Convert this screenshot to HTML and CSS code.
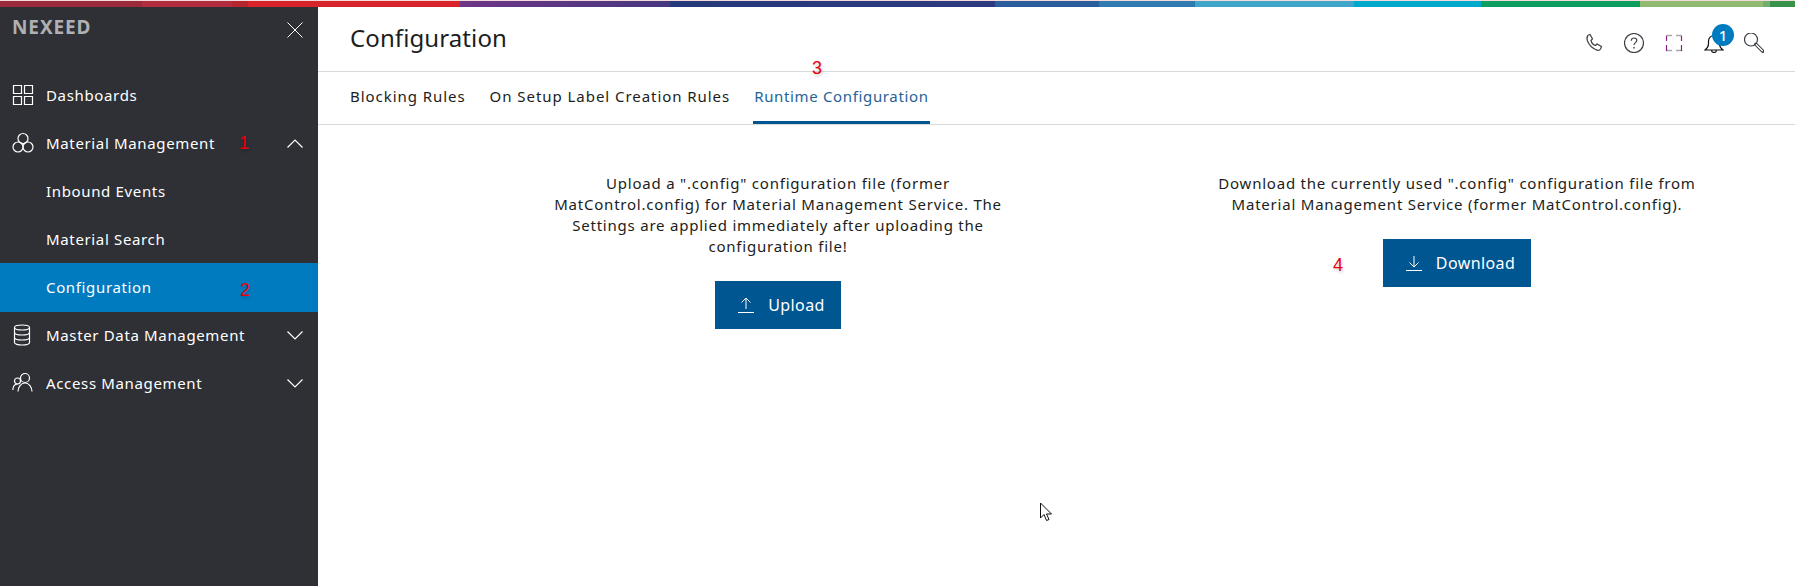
FILE: index.html
```html
<!DOCTYPE html>
<html lang="en">
<head>
    <meta charset="UTF-8">
    <meta name="viewport" content="width=device-width, initial-scale=1.0">
    <title>Configuration</title>
    <link rel="stylesheet" href="styles.css">
</head>
<body>
    <div class="stripe">
        <span class="s1"></span><span class="s2"></span><span class="s3"></span><span class="s4"></span>
        <span class="s5"></span><span class="s6"></span><span class="s7"></span><span class="s8"></span>
        <span class="s9"></span><span class="s10"></span><span class="s11"></span><span class="s12"></span>
        <span class="s13"></span><span class="s14"></span>
    </div>

    <div class="app">
        <aside class="sidebar">
            <div class="brand">
                <span class="brand-name">NEXEED</span>
                <svg class="close" width="16" height="16" viewBox="0 0 16 16"><path d="M.5.5l15 15M15.500.5l-15 15"/></svg>
            </div>
            <nav class="nav">
                <a class="nav-item">
                    <svg class="nav-icon" width="22" height="22" viewBox="0 0 22 22"><path d="M1.500 1.500h8v8h-8zM12.500 1.500h8v8h-8zM1.500 12.500h8v8h-8zM12.500 12.500h8v8h-8z"/></svg>
                    <span>Dashboards</span>
                </a>
                <a class="nav-item">
                    <svg class="nav-icon" width="22" height="22" viewBox="0 0 22 22"><circle cx="11" cy="6.500" r="5"/><circle cx="6" cy="15" r="5"/><circle cx="16" cy="15" r="5"/></svg>
                    <span>Material Management</span>
                    <svg class="chevron" width="16" height="9" viewBox="0 0 16 9"><path d="M.5 8.500L8 1l7.500 7.500"/></svg>
                </a>
                <a class="nav-item sub">Inbound Events</a>
                <a class="nav-item sub">Material Search</a>
                <a class="nav-item sub active">Configuration</a>
                <a class="nav-item">
                    <svg class="nav-icon" width="22" height="22" viewBox="0 0 22 22"><path d="M2.500 3.500c0-1.500 3.500-2.500 7.500-2.500s7.500 1 7.500 2.500v15c0 1.500-3.500 2.500-7.500 2.500s-7.500-1-7.500-2.500zM2.500 3.500c0 1.500 3.500 2.500 7.500 2.500s7.500-1 7.500-2.500M2.500 8.500c0 1.500 3.500 2.500 7.500 2.500s7.500-1 7.500-2.500M2.500 13.500c0 1.500 3.500 2.500 7.500 2.500s7.500-1 7.500-2.500"/></svg>
                    <span>Master Data Management</span>
                    <svg class="chevron" width="16" height="9" viewBox="0 0 16 9"><path d="M.5.5L8 8l7.500-7.500"/></svg>
                </a>
                <a class="nav-item">
                    <svg class="nav-icon" width="22" height="22" viewBox="0 0 22 22"><circle cx="13" cy="6" r="4.500"/><path d="M6 19.500c.2-4.500 2.800-8.500 7-8.500s6.800 4 7 8.500"/><circle cx="5.500" cy="9" r="3"/><path d="M.8 18c.1-3 1.700-5.800 4.700-6"/></svg>
                    <span>Access Management</span>
                    <svg class="chevron" width="16" height="9" viewBox="0 0 16 9"><path d="M.5.5L8 8l7.500-7.500"/></svg>
                </a>
            </nav>
        </aside>

        <main class="main">
            <header class="topbar">
                <h1>Configuration</h1>
                <div class="actions">
                    <svg class="action" width="20" height="20" viewBox="0 0 20 20"><path d="M3.500 2.500l2.500-1 2.500 4.500-1.500 1.500c.5 2 2.500 4.500 4.500 5l1.500-1.500 4.500 2.500-1 2.500c-1 1.500-3 1.500-5 .5-3.500-1.500-6.500-5-8-8.500-.8-2-.8-4 .5-5.500z"/></svg>
                    <svg class="action" width="20" height="20" viewBox="0 0 20 20"><circle cx="10" cy="10" r="9.500"/><path d="M7.300 7.800c0-1.700 1.200-2.800 2.800-2.800s2.700 1 2.700 2.400c0 2.200-2.800 2.300-2.800 4.600"/><path class="dot" d="M9.300 14h1.400v1.500H9.300z"/></svg>
                    <svg class="action frame" width="20" height="20" viewBox="0 0 20 20">
                        <path class="frame-edge" d="M2 2.500h6M12 2.500h6M2 17.500h6M12 17.500h6"/>
                        <path class="frame-side" d="M2.500 3v5M17.500 3v5M2.500 12v6M17.500 12v6"/>
                    </svg>
                    <div class="bell">
                        <svg class="action" width="20" height="20" viewBox="0 0 20 20"><path d="M1 17c2-1.500 3.500-3 3.500-6V8c0-3 2.500-5.500 5.500-5.500s5.500 2.500 5.500 5.500v3c0 3 1.500 4.500 3.500 6zM7.500 17c0 1.500 1 2.500 2.500 2.500s2.500-1 2.500-2.500"/></svg>
                        <span class="badge">1</span>
                    </div>
                    <svg class="action" width="20" height="20" viewBox="0 0 20 20">
                        <circle cx="7" cy="6.500" r="6.500"/>
                        <path class="handle-out" d="M11.800 11.300l7 7"/>
                        <path class="handle-in" d="M12.300 11.800l6 6"/>
                    </svg>
                </div>
            </header>

            <div class="tabs">
                <a class="tab">Blocking Rules</a>
                <a class="tab">On Setup Label Creation Rules</a>
                <a class="tab current">Runtime Configuration</a>
            </div>

            <section class="content">
                <div class="panel upload">
                    <p>Upload a ".config" configuration file (former MatControl.config) for Material Management Service. The Settings are applied immediately after uploading the configuration file!</p>
                    <button class="btn">
                        <svg width="18" height="18" viewBox="0 0 18 18"><path d="M1 16.500h16M9 13V2M4.500 6.500L9 2l4.500 4.500"/></svg>
                        Upload
                    </button>
                </div>
                <div class="panel download">
                    <p>Download the currently used ".config" configuration file from Material Management Service (former MatControl.config).</p>
                    <button class="btn">
                        <svg width="18" height="18" viewBox="0 0 18 18"><path d="M1 16.500h16M9 2v11M4.500 8.500L9 13l4.500-4.500"/></svg>
                        Download
                    </button>
                </div>
            </section>
        </main>
    </div>

    <!-- annotations drawn on top of the screenshot -->
    <span class="mark m1">1</span>
    <span class="mark m2">2</span>
    <span class="mark m3">3</span>
    <span class="mark m4">4</span>

    <svg class="cursor" width="14" height="20" viewBox="0 0 14 20"><path d="M1.500 1v15l3.500-3.500 2.500 6 2.500-1-2.500-5.500h5z"/></svg>
</body>
</html>
```

FILE: styles.css
```css
* {
    box-sizing: border-box;
}
body {
    margin: 0;
    height: 586px;
    overflow: hidden;
    background: #fff;
    color: #1b1d21;
    font-family: "Noto Sans", Arial, sans-serif;
    font-size: 15px;
    letter-spacing: 0.65px;
}
svg {
    fill: none;
    stroke: currentColor;
    stroke-width: 1;
}

/* top colour stripe */
.stripe {
    display: flex;
    height: 7px;
    border-top: 1px solid #f3dcdc;
}
.stripe span { display: block; }
.s1 { width: 142px; background: #9c2a3a; }
.s2 { width: 90px; background: #b32b3f; }
.s3 { width: 16px; background: #b5262c; }
.s4 { width: 212px; background: #d9232a; }
.s5 { width: 210px; background: linear-gradient(90deg, #6f3587, #46387f); }
.s6 { width: 325px; background: linear-gradient(90deg, #253a7a, #2d3a80); }
.s7 { width: 104px; background: #2a5d9c; }
.s8 { width: 96px; background: #2f7bb0; }
.s9 { width: 159px; background: #3fa5c9; }
.s10 { width: 127px; background: #00a8cb; }
.s11 { width: 159px; background: #0e9e60; }
.s12 { width: 123px; background: #8fba70; }
.s13 { width: 7px; background: #6fb070; }
.s14 { flex: 1; background: #38924a; }

.app {
    display: flex;
    height: 579px;
}

/* sidebar */
.sidebar {
    width: 318px;
    flex-shrink: 0;
    background: #2e3036;
    color: #fff;
}
.brand {
    display: flex;
    justify-content: space-between;
    height: 64px;
    padding: 7px 15px 0 12px;
}
.brand-name {
    font-size: 19px;
    font-weight: 700;
    color: #afb0b3;
    letter-spacing: 0.9px;
}
.close {
    margin-top: 8px;
}
.nav-item {
    display: flex;
    align-items: center;
    height: 48px;
    padding: 0 15px 0 12px;
}
.nav-icon {
    margin-right: 12px;
    stroke-width: 1.2;
}
.chevron {
    margin-left: auto;
    stroke-width: 1.2;
}
.sub {
    padding-left: 46px;
}
.active {
    background: #007bc0;
    height: 49px;
    margin-bottom: -1px;
    padding-bottom: 2px;
}

/* header and tabs */
.main {
    flex: 1;
}
.topbar {
    display: flex;
    justify-content: space-between;
    align-items: center;
    height: 65px;
    padding: 0 31px 4px 32px;
    border-bottom: 1px solid #d8d9db;
}
.topbar h1 {
    margin: 0;
    font-size: 24px;
    font-weight: 400;
    letter-spacing: 0.1px;
}
.actions {
    display: flex;
    align-items: center;
    gap: 20px;
    padding-top: 12px;
    color: #3c4044;
}
.action {
    stroke-width: 1.2;
}
.dot {
    fill: currentColor;
    stroke: none;
}
.frame-side {
    stroke: #8e1f8e;
    stroke-width: 1.2;
}
.frame-edge {
    stroke: #a8a8ac;
    stroke-width: 1.5;
}
.handle-out {
    stroke-width: 3.4;
    stroke-linecap: round;
}
.handle-in {
    stroke: #fff;
    stroke-width: 1.4;
    stroke-linecap: round;
}
.bell {
    position: relative;
    height: 20px;
}
.bell .action {
    color: #111;
}
.badge {
    position: absolute;
    top: -9px;
    left: 8px;
    width: 22px;
    height: 22px;
    border-radius: 50%;
    background: #007bc0;
    color: #fff;
    font-size: 15px;
    font-weight: 500;
    line-height: 22px;
    letter-spacing: 0;
    text-align: center;
}
.tabs {
    display: flex;
    gap: 22px;
    height: 53px;
    padding-left: 31px;
    border-bottom: 1px solid #d8d9db;
    letter-spacing: 0.95px;
}
.tab {
    padding: 14px 1px 0;
    height: 52px;
}
.current {
    color: #1f6396;
    border-bottom: 3px solid #005691;
    letter-spacing: 0.65px;
}

/* upload and download panels */
.content {
    display: flex;
    padding: 48px 0 0 220px;
}
.panel {
    display: flex;
    flex-direction: column;
    align-items: center;
    text-align: center;
    letter-spacing: 0.78px;
}
.panel p {
    margin: 0 0 24px;
    line-height: 21px;
}
.upload {
    width: 480px;
}
.upload p {
    width: 456px;
}
.download {
    width: 500px;
    margin-left: 189px;
}
.btn {
    display: flex;
    align-items: center;
    gap: 13px;
    height: 48px;
    padding: 0 16px 0 22px;
    border: 0;
    background: #005691;
    color: #fff;
    font-family: inherit;
    font-size: 16px;
    letter-spacing: 0.4px;
}

/* annotations */
.mark {
    position: absolute;
    color: #e8000a;
    font-family: "Liberation Sans", Arial, sans-serif;
    font-size: 18px;
    line-height: 20px;
    letter-spacing: 0;
    text-shadow: 1px 2px 3px rgba(0, 0, 0, 0.2);
}
.m1 { left: 239px; top: 133px; }
.m2 { left: 240px; top: 280px; }
.m3 { left: 812px; top: 58px; }
.m4 { left: 1333px; top: 255px; }
.cursor {
    position: absolute;
    left: 1039px;
    top: 502px;
    fill: #fff;
    stroke: #111;
}
```
